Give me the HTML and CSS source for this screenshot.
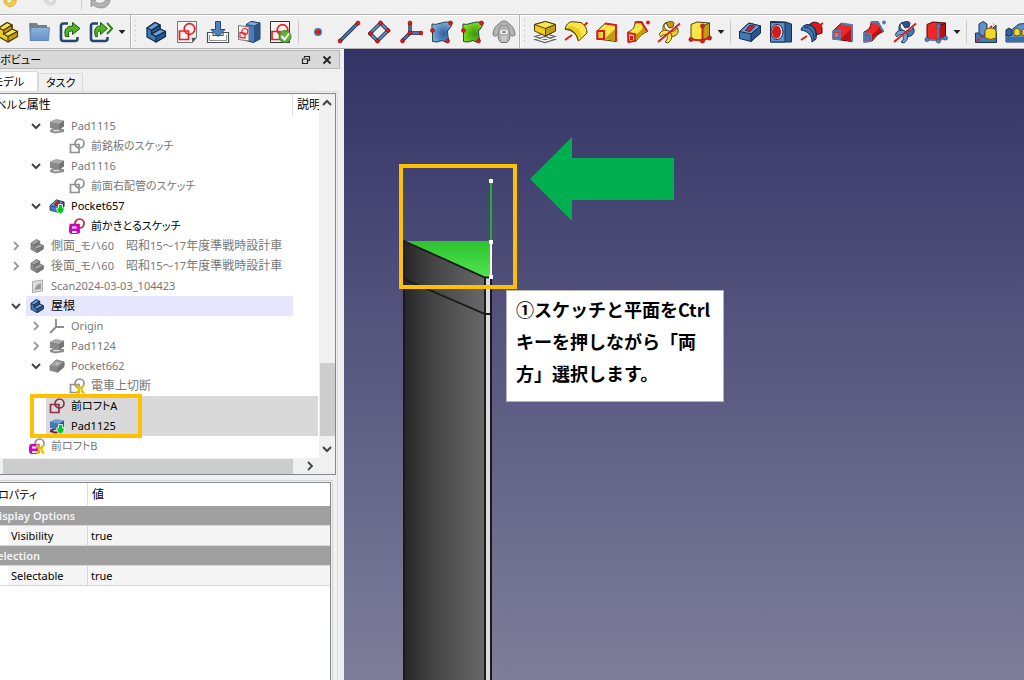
FILE: index.html
```html
<!DOCTYPE html>
<html lang="ja">
<head>
<meta charset="utf-8">
<title>コンボビュー</title>
<link rel="stylesheet" href="styles.css">
</head>
<body>
<svg class="sprite" aria-hidden="true">
  <defs>
    <linearGradient id="folder" x1="0" y1="0" x2="0" y2="1"><stop offset="0" stop-color="#8db3dd"/><stop offset="1" stop-color="#6492c9"/></linearGradient>
    <radialGradient id="blueSurf" cx=".6" cy=".6" r=".6"><stop offset="0" stop-color="#2d5f9f"/><stop offset="1" stop-color="#79a8dc"/></radialGradient>
    <radialGradient id="greenSurf" cx=".6" cy=".6" r=".6"><stop offset="0" stop-color="#3f9412"/><stop offset="1" stop-color="#7bdc1e"/></radialGradient>
  </defs>
  <symbol id="body" viewBox="0 0 24 24">
    <g stroke="var(--o)" stroke-linejoin="round" stroke-width="1.2">
      <path fill="var(--b)" d="M3 8 11 2.500l5 2.500v4l5 2.500v5L12 22l-9-5z"/>
      <path fill="var(--a)" d="M3 8l8-5.500L16 5 7.500 10.200zM7.500 14l8.500-5 5.500 2.500-9.500 5z"/>
      <path fill="var(--c)" d="M7.500 10.200 16 5v4l-8.500 5zM12 16.500l9.500-5v5L12 22z"/>
    </g>
  </symbol>
  <symbol id="sketch" viewBox="0 0 24 24">
    <path fill="#f5f5f3" stroke="#777" d="M2.500 1.500h19v16l-4 5h-15z"/><path fill="#555" d="M21.500 17.500l-5 .5 1 4.500z"/>
    <g fill="none" stroke="#ee1c24" stroke-width="1.700"><path d="M4.500 11h9v8.500h-9z"/><circle cx="14.500" cy="9" r="5.300"/></g>
  </symbol>
  <symbol id="check" viewBox="0 0 24 24">
    <path fill="#f5f5f3" stroke="#333" d="M2.500 1.500h19v21h-19z"/>
    <g fill="none" stroke="#ee1c24" stroke-width="1.700"><path d="M4 11.500h8v8H4z"/><circle cx="14.500" cy="10" r="5.300"/></g>
    <circle cx="17" cy="16.500" r="6" fill="#62ad38" stroke="#3f8420"/><path d="M13.500 16l3 3.500 4.500-6" fill="none" stroke="#fff" stroke-width="2"/>
  </symbol>
  <symbol id="folder-open" viewBox="0 0 24 24">
    <path fill="#778086" d="M2 3h8l1 2h9v14H3z"/><path fill="url(#folder)" stroke="#5580b2" stroke-width=".8" d="M4 7.500h18.500l-1 13H3z"/>
  </symbol>
  <symbol id="link" viewBox="0 0 24 24">
    <path d="M10 3.500H5.500q-2.500 0-2.500 2.500v12.500q0 2.500 2.500 2.500H17q2.500 0 2.500-2.500V17" fill="none" stroke="#24476b" stroke-width="2.600"/>
    <path fill="#52b32a" stroke="#1d5c0c" d="M7.500 16.500c-2-7 1-10.500 7-10.500V2.500l7.500 6-7.500 6V11c-4 0-5 1.500-3.500 5.500z"/>
  </symbol>
  <symbol id="links" viewBox="0 0 24 24">
    <path d="M9 3.500H4.500Q2 3.500 2 6v12.500Q2 21 4.500 21H16q2.500 0 2.500-2.500V17" fill="none" stroke="#24476b" stroke-width="2.600"/>
    <path fill="#52b32a" stroke="#1d5c0c" d="M6.500 16.500c-2-7 0-10.500 5-10.500V2.500l7 6-7 6V11c-3 0-4 1.500-3 5.500z"/>
    <path d="M18 3l5 5.500-5 5.500" fill="none" stroke="#318817" stroke-width="2"/>
  </symbol>
  <symbol id="import" viewBox="0 0 24 24">
    <path fill="#fff" stroke="#455" stroke-width="1.200" d="M1.500 12.500H7v3h10v-3h5.500v10h-21z"/><path fill="none" stroke="#777" stroke-width=".8" d="M3.500 15v5.500h17V15"/>
    <path fill="#4d82bd" stroke="#234a7d" d="M9.500 1.500h5v8h4.500L12 16.500 5 9.500h4.500z"/>
  </symbol>
  <symbol id="mapsketch" viewBox="0 0 24 24">
    <path fill="#4b7cb5" stroke="#17375f" d="M9 5.500 14 1.500l9 1.500v16l-6.500 3.500-7.500-2z"/><path fill="#85aede" stroke="#17375f" stroke-width=".8" d="M9 4.500 14 1.500l9 1.500-6 3z"/><path fill="#2c5586" d="M17 6.500l6-3V19l-6 3z"/>
    <path fill="#f2f2f0" stroke="#777" d="M1.500 5.500 12 7v14L1.500 19.500z"/><g fill="none" stroke="#e3232a" stroke-width="1.200"><path d="M3 12.500l5 .6v5l-5-.7z"/><circle cx="7.800" cy="11.500" r="3"/></g>
  </symbol>
  <symbol id="point" viewBox="0 0 24 24"><circle cx="12" cy="12" r="4" fill="#4878aa"/><circle cx="12" cy="12" r="2.500" fill="#e31818"/></symbol>
  <symbol id="line" viewBox="0 0 24 24">
    <path d="M3 21 21 3" stroke="#15253a" stroke-width="3.600"/><path d="M3 21 21 3" stroke="#4779b2" stroke-width="2"/>
    <g fill="#e31818" stroke="#8b0808" stroke-width=".6"><circle cx="3" cy="21" r="2"/><circle cx="21" cy="3" r="2"/></g>
  </symbol>
  <symbol id="plane" viewBox="0 0 24 24">
    <path d="M12.500 3 20 10.500 9.500 21 2 13.500z" fill="none" stroke="#15253a" stroke-width="3.600"/><path d="M12.500 3 20 10.500 9.500 21 2 13.500z" fill="none" stroke="#5f90c8" stroke-width="2"/>
    <g fill="#e31818" stroke="#8b0808" stroke-width=".6"><circle cx="12.500" cy="3" r="2"/><circle cx="20" cy="10.500" r="2"/><circle cx="9.500" cy="21" r="2"/><circle cx="2.500" cy="13.500" r="2"/></g>
  </symbol>
  <symbol id="axes" viewBox="0 0 24 24">
    <path d="M11 3v10h11M11 13l-8 8" fill="none" stroke="#15253a" stroke-width="3.400"/><path d="M11 3v10h11M11 13l-8 8" fill="none" stroke="#4779b2" stroke-width="1.800"/>
    <g fill="#e31818" stroke="#8b0808" stroke-width=".6"><circle cx="11" cy="3" r="2"/><circle cx="11" cy="13" r="2"/><circle cx="22" cy="13" r="2"/><circle cx="3.500" cy="21" r="2"/></g>
  </symbol>
  <symbol id="surface" viewBox="0 0 24 24">
    <path fill="var(--f)" stroke="#25443f" stroke-width="1" d="M2 4q4 1 7-.5 5-2 13-1.500 0 5-4.500 9 0 5 1.500 10.500-4 1.500-7-1-5 2.500-9.500 1 0-4 0-10.500Q1.500 8 2 4z"/>
    <g fill="#e31818" stroke="#8b0808" stroke-width=".6"><circle cx="20.500" cy="3" r="2"/><circle cx="2.500" cy="10.500" r="2"/><circle cx="17.500" cy="21" r="2"/></g>
  </symbol>
  <symbol id="sheep" viewBox="0 0 24 24">
    <path fill="#b4b4b4" stroke="#767676" d="M7 4c2-4 8-4 10 0 3 1 6 6 6 11-2 2-4 1-5-1 0 4-1 7-3 8.500H9C7 21 6 18 6 14c-1 2-3 3-5 1 0-5 3-10 6-11z"/>
    <path fill="none" stroke="#8b8b8b" d="M6 14l2-8M18 14l-2-8M8 5q4 2 8 0"/><rect x="8" y="10" width="8" height="4" rx="2" fill="#f0f0f0"/><path d="M10.500 12h3" stroke="#555" stroke-width="1.500"/><path fill="#c9c9c9" d="M9 16h6l-1 5h-4z"/>
  </symbol>
  <symbol id="pad" viewBox="0 0 24 24">
    <path fill="#f4f4f4" stroke="#606466" stroke-width="1.200" d="M2 19.500l10-3 10 3-10 3zM2 16.500l10-3 10 3-10 3z"/>
    <path fill="var(--b)" stroke="var(--o)" d="M1.500 4.500 12.500 1.500l10 3v6.500l-10 5-11-5z"/><path fill="var(--a)" stroke="var(--o)" d="M1.500 4.500 12.500 1.500l10 3-10 4z"/><path fill="var(--c)" stroke="var(--o)" d="M12.500 8.500l10-4v6.500l-10 5z"/>
  </symbol>
  <symbol id="revolve" viewBox="0 0 24 24">
    <path fill="var(--a)" stroke="var(--o)" d="M1 9Q3 2 8 1.700l9 .8Q23 6 23 13l-8.500 8Q13 11 1 9z"/><path fill="var(--b)" d="M5 5.500Q16 6 18 17l-3.500 3.500Q13 11 2 8.500z"/><path fill="none" stroke="var(--o)" d="M1 9Q11 8 14.500 21"/>
    <path d="M1 20l7-5M20 5.500l3.500-3" stroke="var(--x)" stroke-width="2"/>
  </symbol>
  <symbol id="groove" viewBox="0 0 24 24">
    <path fill="#d91c1c" stroke="#4c0a0a" d="M10 4c4-4 11-1 12 4v5l-6 2z"/><path fill="var(--b)" stroke="var(--o)" d="M1 10c1-5 7-7 11-4 4 2 5 7 4 13l-4 3c0-6-4-11-11-12z"/><path d="M4 7c7 0 10 5 10 13M7 5c6 0 9 4 9 12" fill="none" stroke="var(--o)"/><path d="M1 20l6-4M19 6l4-3" stroke="#d91c1c" stroke-width="2"/>
  </symbol>
  <symbol id="loft" viewBox="0 0 24 24">
    <path fill="var(--a)" stroke="var(--o)" d="M2 11 10 3.500 21 5v16.500L10 20l-8-1z"/><path fill="var(--c)" stroke="none" d="M9.500 19 20 9v12z"/>
    <path fill="none" stroke="var(--x)" stroke-width="2" d="M10 3.500 21 5v16.500M2.500 11H9v8H2.500z"/><path fill="var(--b)" d="M4 13h3v4H4z"/>
  </symbol>
  <symbol id="sweep" viewBox="0 0 24 24">
    <path fill="var(--a)" stroke="var(--o)" d="M2 12c5-2 7-5 7-10l7-.5 5.500 10C17 13 14 16 10 21l-8 1z"/><path fill="var(--c)" d="M10 14c4-2 6-4 7-8l4 5c-4 2-8 5-11 9z"/>
    <path fill="none" stroke="var(--x)" stroke-width="1.800" d="M9 2.500 15 2l6.500 9.500M2 13l7 1v7l-6.500 1z"/><circle cx="22" cy="2.500" r="2" fill="var(--x)"/><path fill="var(--x)" d="M4 16h3v4H4z"/>
  </symbol>
  <symbol id="helix" viewBox="0 0 24 24">
    <g stroke="var(--o)" stroke-width=".9"><path fill="var(--c)" d="M9 3c3-2 7-2 8 0l-1 4-4 1z"/><path fill="var(--b)" d="M9 2.500c-3 2-2 6 1 8 3 2 9 1 10-3 3 4 0 9-5 9-6 0-10-4-9-9 0-2 1-4 3-5z"/><path fill="var(--a)" d="M3 13c2-3 7-4 10-1 3 4 2 8-2 11l-3-1c3-3 3-5 1-7-2-1-4 0-5 2-1-1-2-2-1-4z"/></g>
    <path d="M1 22 23 3.500" stroke="#da1f1f" stroke-width="2"/>
  </symbol>
  <symbol id="cube" viewBox="0 0 24 24">
    <path fill="var(--a)" stroke="var(--o)" d="M3 4.500 9 2l12.500 1v14.500L14 20.500 3 19z"/><path fill="var(--c)" stroke="var(--o)" d="M14.500 6l7-3v14.500l-7 3z"/>
    <path fill="none" stroke="var(--x)" stroke-width="2" d="M14.500 6v14.500l7.500-3M14.500 20.500 3 19.500"/><g fill="var(--x)" stroke="#333" stroke-width=".4"><circle cx="14.500" cy="6" r="2.200"/><circle cx="14.500" cy="21" r="2.200"/><circle cx="21.500" cy="18" r="2.200"/><circle cx="3" cy="19.500" r="2.200"/></g>
  </symbol>
  <symbol id="pocket" viewBox="0 0 24 24">
    <path fill="var(--b)" stroke="var(--o)" d="M1.500 11.500 11 3l11.500 3v7L13 21.500l-11.500-3z"/><path fill="var(--a)" stroke="var(--o)" d="M1.500 11.500 11 3l11.500 3L13 14z"/><path fill="var(--c)" stroke="var(--o)" d="M13 14l9.500-8v7L13 21.500z"/><path fill="var(--x)" stroke="var(--o)" stroke-width=".8" d="M7.500 10.500 12 5l5 1.200-5 5.300z"/>
  </symbol>
  <symbol id="hole" viewBox="0 0 24 24">
    <path fill="#315f96" stroke="#142e4f" d="M1.500 1.500l15 .5 6 2v18H1.500z"/><path fill="#5f92cc" stroke="#142e4f" d="M1.500 2.500h14.500V22H1.500z"/><ellipse cx="8" cy="12" rx="6" ry="7.500" fill="#e8eef5" stroke="#152b49"/><ellipse cx="7.500" cy="12" rx="4.500" ry="6.500" fill="#d61a1a"/>
  </symbol>
  <symbol id="boolean" viewBox="0 0 24 24">
    <path fill="#4677af" stroke="#1a3760" d="M1.500 13h21v9.500h-21zM14 13l8-8v8"/><path fill="#5d91cb" stroke="#1a3760" d="M5 4l4-2.500L13 4v10l-4 2-4-2z"/><path d="M3 21l9-8M16 8l4-4" stroke="#da1f1f" stroke-width="1.800" stroke-dasharray="3 2"/><path fill="#f3d62b" stroke="#6a5600" d="M11 10q5.500-4 11 0v8q-5.500 3-11 0z"/>
  </symbol>
  <symbol id="pattern" viewBox="0 0 24 24">
    <path fill="#5d91cb" stroke="#1a3760" d="M1 14 14 4l14-1v13l-4 6H1z"/><path fill="#3c6da5" d="M1 17h22v5H1z"/><path fill="#326299" stroke="#142e4f" d="M1 10l3-2 3 2v5l-3 1-3-1z"/><path fill="#f3d62b" stroke="#6a5600" d="M9 10l3-2 3 2v5l-3 1-3-1zM17 10l3-2 3 2v5l-3 1-3-1z"/>
  </symbol>
  <symbol id="s-sketch" viewBox="0 0 16 16"><g fill="none" stroke="currentColor" stroke-width="1.700"><path d="M1.500 6.500h8.500v8H1.500z"/><circle cx="10.500" cy="5.500" r="4.500"/></g></symbol>
  <symbol id="s-down" viewBox="0 0 16 16"><path fill="#00c81e" stroke="#fff" stroke-width=".8" d="M9.500 6.500h4V10h2l-1 4-3 2-3-2-1-4h2z"/></symbol>
  <symbol id="s-save" viewBox="0 0 16 16"><rect y="6" width="10.500" height="10" rx="3.500" fill="#cf00d2"/><path fill="#fff" d="M3 8.500h4.500v2H3zM3 13h4.500v2H3z"/></symbol>
  <symbol id="s-cut" viewBox="0 0 16 16"><g fill="none" stroke="#efc000" stroke-width="2.200"><path d="M7 7.500q3 0 3 3.500t-3 4M15.500 7.500q-3 0-3 3.500t3 4"/></g></symbol>
  <symbol id="s-origin" viewBox="0 0 16 16"><path d="M7 1v8h8M7 9l-6 6" fill="none" stroke="#8b8b8b" stroke-width="1.800"/></symbol>
  <symbol id="s-scan" viewBox="0 0 16 16"><path fill="#ddd" stroke="#aaa" d="M3.500 3.500 13.500 2v11l-10 1.500z"/><path fill="#999" d="M5 12l3-5 4-2v6z"/></symbol>
  <symbol id="s-pad" viewBox="0 0 16 16"><path fill="var(--s)" d="M1 12l4-2 10 1v3l-9 1.500L1 14z"/><path fill="#ddd" d="M4 12l6-.5 1 1.500-6 .5z"/><path fill="var(--a)" d="M1 3.500 7 1l8 1.500-5 3z"/><path fill="var(--b)" d="M1 3.500 10 5.500V12L1 10z"/><path fill="var(--c)" d="M10 5.500l5-3v6L10 12z"/></symbol>
  <symbol id="chev-d" viewBox="0 0 10 10"><path d="M1 3l4 4 4-4" fill="none" stroke="#444" stroke-width="2"/></symbol>
  <symbol id="chev-u" viewBox="0 0 10 10"><path d="M1 7l4-4 4 4" fill="none" stroke="#444" stroke-width="2"/></symbol>
  <symbol id="chev-r" viewBox="0 0 10 10"><path d="M3 1l4 4-4 4" fill="none" stroke="currentColor" stroke-width="1.800"/></symbol>
  <symbol id="caret" viewBox="0 0 8 8"><path d="M.5 2h7L4 6z" fill="#222"/></symbol>
</svg>

<div class="app">
  <div class="bar bar-top" role="toolbar" aria-label="編集">
    <button class="tool undo" aria-label="元に戻す"><svg viewBox="0 0 24 14"><path d="M4 0v3l5 4q7-1 7.500-7h-4q-.5 3-4 3.500L6 0z" fill="#f2cf3e" stroke="#c7a11c" stroke-width=".6"/></svg></button>
    <button class="tool redo" aria-label="やり直し"><svg viewBox="0 0 24 14"><path d="M17 0v2l-4 3.500Q6 5 5 0h4q.5 2 3 2.500L15 0z" fill="#dcdcdc" stroke="#cfcfcf" stroke-width=".6"/></svg></button>
    <span class="split"></span>
    <button class="tool" aria-label="更新"><svg viewBox="0 0 24 14"><path d="M2 7V0h5l-1.500 1.500Q12 6 17 0h4q-1 7-8 8-5 .5-9-3z" fill="#b2b2b2" stroke="#909090" stroke-width=".8"/></svg></button>
  </div>
  <div class="bar bar-main">
    <div class="group first" role="toolbar" aria-label="構造">
      <button class="tool yellow" aria-label="パーツ"><svg><use href="#body"/></svg></button>
      <button class="tool" aria-label="グループ"><svg><use href="#folder-open"/></svg></button>
      <button class="tool" aria-label="リンク作成"><svg><use href="#link"/></svg></button>
      <button class="tool" aria-label="リンク操作"><svg><use href="#links"/></svg></button>
      <button class="drop" aria-label="リンクメニュー"><svg><use href="#caret"/></svg></button>
    </div>
    <div class="group" role="toolbar" aria-label="ヘルパー">
      <span class="grip"></span>
      <button class="tool blue" aria-label="ボディー"><svg><use href="#body"/></svg></button>
      <button class="tool" aria-label="スケッチ"><svg><use href="#sketch"/></svg></button>
      <button class="tool" aria-label="スケッチ編集"><svg><use href="#import"/></svg></button>
      <button class="tool" aria-label="スケッチをマップ"><svg><use href="#mapsketch"/></svg></button>
      <button class="tool" aria-label="スケッチ検証"><svg><use href="#check"/></svg></button>
      <span class="split"></span>
      <button class="tool" aria-label="データム点"><svg><use href="#point"/></svg></button>
      <button class="tool" aria-label="データム線"><svg><use href="#line"/></svg></button>
      <button class="tool" aria-label="データム面"><svg><use href="#plane"/></svg></button>
      <button class="tool" aria-label="座標系"><svg><use href="#axes"/></svg></button>
      <button class="tool surf-blue" aria-label="シェイプバインダー"><svg><use href="#surface"/></svg></button>
      <button class="tool surf-green" aria-label="サブシェイプバインダー"><svg><use href="#surface"/></svg></button>
      <button class="tool" aria-label="クローン"><svg><use href="#sheep"/></svg></button>
    </div>
    <div class="group last" role="toolbar" aria-label="モデリング">
      <span class="grip"></span>
      <button class="tool yellow" aria-label="パッド"><svg><use href="#pad"/></svg></button>
      <button class="tool yellow" aria-label="回転押し出し"><svg><use href="#revolve"/></svg></button>
      <button class="tool yellow" aria-label="加算ロフト"><svg><use href="#loft"/></svg></button>
      <button class="tool yellow" aria-label="加算パイプ"><svg><use href="#sweep"/></svg></button>
      <button class="tool yellow" aria-label="加算らせん"><svg><use href="#helix"/></svg></button>
      <button class="tool yellow" aria-label="加算プリミティブ"><svg><use href="#cube"/></svg></button>
      <button class="drop" aria-label="加算メニュー"><svg><use href="#caret"/></svg></button>
      <span class="split"></span>
      <button class="tool blue" aria-label="ポケット"><svg><use href="#pocket"/></svg></button>
      <button class="tool" aria-label="ホール"><svg><use href="#hole"/></svg></button>
      <button class="tool blue" aria-label="グルーブ"><svg><use href="#groove"/></svg></button>
      <button class="tool red" aria-label="減算ロフト"><svg><use href="#loft"/></svg></button>
      <button class="tool red" aria-label="減算パイプ"><svg><use href="#sweep"/></svg></button>
      <button class="tool blue" aria-label="減算らせん"><svg><use href="#helix"/></svg></button>
      <button class="tool red" aria-label="減算プリミティブ"><svg><use href="#cube"/></svg></button>
      <button class="drop" aria-label="減算メニュー"><svg><use href="#caret"/></svg></button>
      <span class="split"></span>
      <button class="tool" aria-label="ブーリアン"><svg><use href="#boolean"/></svg></button>
      <button class="tool" aria-label="パターン"><svg><use href="#pattern"/></svg></button>
    </div>
  </div>

  <div class="main">
    <aside class="dock">
      <header class="dock-title">
        <h1>コンボビュー</h1>
        <button aria-label="フロート"><svg viewBox="0 0 10 10"><path d="M3.500 3V1.500h5v4H7M1.500 4h5v4.500h-5z" fill="none" stroke="#222" stroke-width="1.200"/></svg></button>
        <button aria-label="閉じる"><svg viewBox="0 0 10 10"><path d="M1.500 1.500l7 7M8.500 1.500l-7 7" stroke="#222" stroke-width="1.800"/></svg></button>
      </header>
      <div class="tabs" role="tablist">
        <button class="tab active" role="tab" aria-selected="true">モデル</button>
        <button class="tab" role="tab" aria-selected="false">タスク</button>
      </div>
      <div class="pane">
        <section class="tree">
          <div class="tree-head"><span class="label-col"><span class="kana">ラベルと</span>属性</span><span class="desc-col">説明</span></div>
          <div class="vscroll"><svg class="arrow"><use href="#chev-u"/></svg><span class="track"></span><span class="vthumb"></span><svg class="arrow"><use href="#chev-d"/></svg></div>
          <div class="rows" role="tree">
            <div class="row d1"><button class="twist" aria-label="折りたたむ"><svg><use href="#chev-d"/></svg></button><span class="cell"><svg class="ico grey"><use href="#s-pad"/></svg>Pad1115</span></div>
            <div class="row d2"><span class="cell"><svg class="ico"><use href="#s-sketch"/></svg>前銘板のスケッチ</span></div>
            <div class="row d1"><button class="twist" aria-label="折りたたむ"><svg><use href="#chev-d"/></svg></button><span class="cell"><svg class="ico grey"><use href="#s-pad"/></svg>Pad1116</span></div>
            <div class="row d2"><span class="cell"><svg class="ico"><use href="#s-sketch"/></svg>前面右配管のスケッチ</span></div>
            <div class="row d1 on"><button class="twist" aria-label="折りたたむ"><svg><use href="#chev-d"/></svg></button><span class="cell"><svg class="ico blue"><use href="#pocket"/><use href="#s-down"/></svg>Pocket657</span></div>
            <div class="row d2 on"><span class="cell"><svg class="ico crimson"><use href="#s-sketch"/><use href="#s-save"/></svg>前かきとるスケッチ</span></div>
            <div class="row d0 kanji"><button class="twist" aria-label="展開"><svg><use href="#chev-r"/></svg></button><span class="cell"><svg class="ico grey"><use href="#body"/></svg><span>側面_<span class="kana">モハ60</span>　昭和<span class="kana">15～17</span>年度準戦時設計車</span></span></div>
            <div class="row d0 kanji"><button class="twist" aria-label="展開"><svg><use href="#chev-r"/></svg></button><span class="cell"><svg class="ico grey"><use href="#body"/></svg><span>後面_<span class="kana">モハ60</span>　昭和<span class="kana">15～17</span>年度準戦時設計車</span></span></div>
            <div class="row d0"><span class="cell"><svg class="ico"><use href="#s-scan"/></svg>Scan2024-03-03_104423</span></div>
            <div class="row d0 on current kanji"><button class="twist" aria-label="折りたたむ"><svg><use href="#chev-d"/></svg></button><span class="cell"><svg class="ico blue"><use href="#body"/></svg>屋根</span></div>
            <div class="row d1"><button class="twist" aria-label="展開"><svg><use href="#chev-r"/></svg></button><span class="cell"><svg class="ico"><use href="#s-origin"/></svg>Origin</span></div>
            <div class="row d1"><button class="twist" aria-label="展開"><svg><use href="#chev-r"/></svg></button><span class="cell"><svg class="ico grey"><use href="#s-pad"/></svg>Pad1124</span></div>
            <div class="row d1"><button class="twist" aria-label="折りたたむ"><svg><use href="#chev-d"/></svg></button><span class="cell"><svg class="ico grey"><use href="#pocket"/></svg>Pocket662</span></div>
            <div class="row d2 kanji"><span class="cell"><svg class="ico"><use href="#s-sketch"/><use href="#s-cut"/></svg>電車上切断</span></div>
            <div class="picked">
              <div class="row d1 on selected"><span class="cell"><svg class="ico wine"><use href="#s-sketch"/></svg>前ロフトA</span></div>
              <div class="row d1 on selected"><span class="cell"><svg class="ico blue"><use href="#s-pad"/><use href="#s-down"/></svg>Pad1125</span></div>
              <span class="marker"></span>
            </div>
            <div class="row d0"><span class="cell"><svg class="ico"><use href="#s-sketch"/><use href="#s-save"/><use href="#s-cut"/></svg>前ロフトB</span></div>
          </div>
          <div class="hscroll"><span class="hthumb"></span><svg class="arrow"><use href="#chev-r"/></svg></div>
        </section>
        <section class="props-frame">
          <div class="props">
            <table>
              <thead><tr><th class="clip"><span>プロパティ</span></th><th>値</th></tr></thead>
              <tbody>
                <tr class="cat"><td colspan="2"><span>Display Options</span></td></tr>
                <tr class="item"><td>Visibility</td><td>true</td></tr>
                <tr class="cat"><td colspan="2"><span>Selection</span></td></tr>
                <tr class="item"><td>Selectable</td><td>true</td></tr>
              </tbody>
            </table>
          </div>
        </section>
      </div>
    </aside>

    <main class="view">
      <svg class="scene" aria-label="3Dビュー">
        <defs><linearGradient id="metal"><stop offset="0" stop-color="#262626"/><stop offset=".35" stop-color="#444"/><stop offset="1" stop-color="#696969"/></linearGradient>
        <linearGradient id="picked" x1="0" y1="0" x2="0" y2="1"><stop offset="0" stop-color="#2fc22f"/><stop offset="1" stop-color="#50e450"/></linearGradient></defs>
        <g transform="translate(-344 -49)">
          <path fill="url(#metal)" d="M404 241l82 36v3000h-82z"/>
          <path fill="#1a1a1a" d="M403 240h2v3000h-2zM484 277h2v3000h-2zM490 277h2v3000h-2z"/>
          <path fill="#dcdcdc" d="M486 278h4v3000h-4z"/>
          <path fill="url(#picked)" d="M404 241h87v36h-6z"/>
          <path fill="none" stroke="#1a1a1a" stroke-width="1.800" d="M404 241l81 36.500h6M404 279l81 35h6"/>
          <path fill="#22b22a" d="M490 181h2v61h-2z"/><path fill="#fff" d="M490 242h2v36h-2zM489 179h4v4h-4zM489 240h4v4h-4zM489 275h4v4h-4z"/>
          <path fill="none" stroke="#ffc000" stroke-width="4" d="M401 166h114v121H401z"/>
          <path fill="#00b050" d="M530 179l42-42v21h102v42H572v21z"/>
        </g>
      </svg>
      <p class="note">①スケッチと平面をCtrl<br>キーを押しながら「両<br>方」選択します。</p>
    </main>
  </div>
</div>
</body>
</html>
```
FILE: styles.css
```css
* { box-sizing: border-box; }
body { margin: 0; font: 11px/20px "Noto Sans", "Noto Sans CJK JP", sans-serif; color: #000; background: #f0f0f0; }
button { padding: 0; border: 0; background: none; font: inherit; color: inherit; flex: none; }
svg { display: block; }
.sprite { position: absolute; width: 0; height: 0; }
.app { display: flex; flex-direction: column; height: 100vh; overflow: hidden; }

.yellow { --a: #fbe64a; --b: #eccc1f; --c: #c49d0c; --o: #4c3e05; --x: #dc1c1c; }
.blue { --a: #6d9ed4; --b: #4479b5; --c: #2b588c; --o: #132b4a; --x: #d81c1c; --s: #6b2340; }
.red { --a: #ee2828; --b: #6ea0d6; --c: #bd1010; --o: #4b0808; --x: #4d7fb9; }
.grey { --a: #a9a9a9; --b: #898989; --c: #757575; --o: #777; --x: #c2c2c2; --s: #8f8f8f; }
.surf-blue { --f: url(#blueSurf); }
.surf-green { --f: url(#greenSurf); }

.bar { display: flex; flex: none; overflow: hidden; }
.bar-top { height: 14px; align-items: flex-start; }
.bar-top .tool svg { height: 14px; }
.bar-top .split { height: 10px; margin-left: 12px; }
.undo { margin-left: -4px; }
.redo { margin-left: 8px; }
.bar-main { height: 35px; border-top: 1px solid #b4b4b4; border-bottom: 1px solid #b0b0b0; }
.group { display: flex; align-items: center; flex: none; border-left: 1px solid #b4b4b4; box-shadow: inset 1px 1px #fff; }
.group.first { margin-left: -8px; padding-right: 2px; border-left: 0; }
.group.last { flex: 1 0 auto; }
.tool { display: flex; justify-content: center; width: 31px; }
.tool svg { width: 24px; height: 24px; }
.drop { display: flex; justify-content: center; width: 12px; }
.drop svg { width: 8px; height: 8px; }
.split { width: 7px; height: 24px; flex: none; background: linear-gradient(#ccc, #ccc) center / 1px 100% no-repeat; }
.grip { width: 3px; height: 27px; margin: 0 3px; flex: none; background: radial-gradient(circle, #b5b5b5 1px, transparent 1px) 0 0 / 3px 5px; }

.main { display: flex; flex: 1; min-height: 0; }
.dock { display: flex; flex-direction: column; width: 344px; flex: none; padding: 1px 4px 0 0; }
.dock-title { display: flex; align-items: center; gap: 11px; height: 19px; flex: none; padding-right: 7px; background: #d9d9d9; border: solid #b8b8b8; border-width: 1px 1px 1px 0; }
.dock-title h1 { flex: 1; margin: 0 0 0 -20px; font: inherit; font-feature-settings: "palt"; }
.dock-title svg { width: 10px; height: 10px; }
.tabs { display: flex; align-items: flex-end; height: 22px; flex: none; padding-top: 2px; font-feature-settings: "palt"; }
.tab { height: 18px; padding: 0 7px; border: 1px solid #d9d9d9; border-bottom: 0; line-height: 17px; }
.tab.active { height: 20px; margin-left: -22px; padding: 0 13px 0 14px; background: #fff; line-height: 19px; }
.pane { display: flex; flex-direction: column; flex: 1; min-height: 0; margin-right: 2px; padding: 1px 1px 0 0; border: solid #dcdcdc; border-width: 1px 1px 0 0; }

.tree { display: grid; grid-template-columns: 1fr 16px; flex: none; border: solid #828790; border-width: 1px 1px 1px 0; background: #fff; }
.tree-head { display: flex; height: 22px; font-size: 12px; line-height: 22px; overflow: hidden; }
.label-col { flex: 1; text-indent: -14px; white-space: nowrap; }
.label-col .kana { text-indent: 0; }
.desc-col { width: 27px; padding-left: 4px; border-left: 1px solid #ddd; overflow: hidden; white-space: nowrap; }
.vscroll { grid-row: 1 / 3; grid-column: 2; display: flex; flex-direction: column; align-items: center; padding: 4px 0; background: #f0f0f0; }
.arrow { width: 10px; height: 10px; flex: none; color: #444; }
.track { flex: 1; }
.vthumb { width: 15px; height: 73px; margin-bottom: 8px; background: #cdcdcd; }
.rows { height: 342px; overflow: hidden; color: #787878; white-space: nowrap; font-feature-settings: "palt"; }
.row { display: flex; height: 20px; padding-left: 26px; }
.row.d1 { padding-left: 46px; }
.row.d2 { padding-left: 66px; }
.twist { display: flex; align-items: center; justify-content: center; width: 20px; margin-left: -20px; color: #999; }
.twist svg { width: 10px; height: 10px; }
.cell { display: flex; align-items: center; gap: 6px; flex: 1; padding-left: 3px; line-height: 20px; }
.ico { width: 16px; height: 16px; flex: none; color: #909090; }
.crimson { color: #d4142c; }
.wine { color: #8f2f4c; }
.kanji { font-size: 12px; }
.kana { font-size: 11px; font-feature-settings: "palt"; }
.on { color: #000; }
.current .cell { margin-right: 26px; background: #e6e6ff; }
.selected .cell { margin-right: 1px; background: #d9d9d9; }
.picked { position: relative; }
.marker { position: absolute; left: 30px; top: -2px; width: 112px; height: 44px; border: 4px solid #ffc000; }
.hscroll { grid-column: 1 / 3; display: flex; align-items: center; gap: 12px; height: 16px; padding: 0 20px 0 3px; background: #f0f0f0; }
.hthumb { flex: 1; height: 15px; background: #cdcdcd; }

.props-frame { flex: 1; margin: 5px 3px 0 0; padding: 1px 1px 0 0; border: solid #d4d4d4; border-width: 1px 1px 0 0; }
.props { height: 100%; border: solid #828790; border-width: 1px 1px 0 0; background: #fff; }
table { width: 100%; border-collapse: separate; border-spacing: 0; table-layout: fixed; }
th, td { height: 20px; padding: 0 0 0 3px; text-align: left; font-weight: 400; line-height: 19px; white-space: nowrap; overflow: hidden; }
th { height: 23px; padding-left: 4px; font-size: 12px; }
th:first-child { width: 88px; border-right: 1px solid #ddd; }
.clip { font-feature-settings: "palt"; }
.clip span { margin-left: -16px; font-size: 11px; }
.cat td { background: #a0a0a0; color: #f4f4f4; font-weight: 600; border-bottom: 1px solid #d8d8d8; }
.cat span { margin-left: -12px; }
.item td { background: #f4f4f4; border-bottom: 1px solid #d8d8d8; }
.item td:first-child { padding-left: 11px; border-right: 1px solid #d8d8d8; background: linear-gradient(90deg, #fff 8px, #f4f4f4 8px); }

.view { position: relative; flex: 1; min-width: 0; background: linear-gradient(#333366, #7e7e9a); }
.scene { width: 100%; height: 100%; }
.note { position: absolute; left: 162px; top: 241px; margin: 0; padding: 2px 9px 12px; width: 218px; border: 1px solid #b4b4b4; background: #fff; font: 700 18px/32px "Noto Sans CJK JP", sans-serif; white-space: nowrap; }
```
